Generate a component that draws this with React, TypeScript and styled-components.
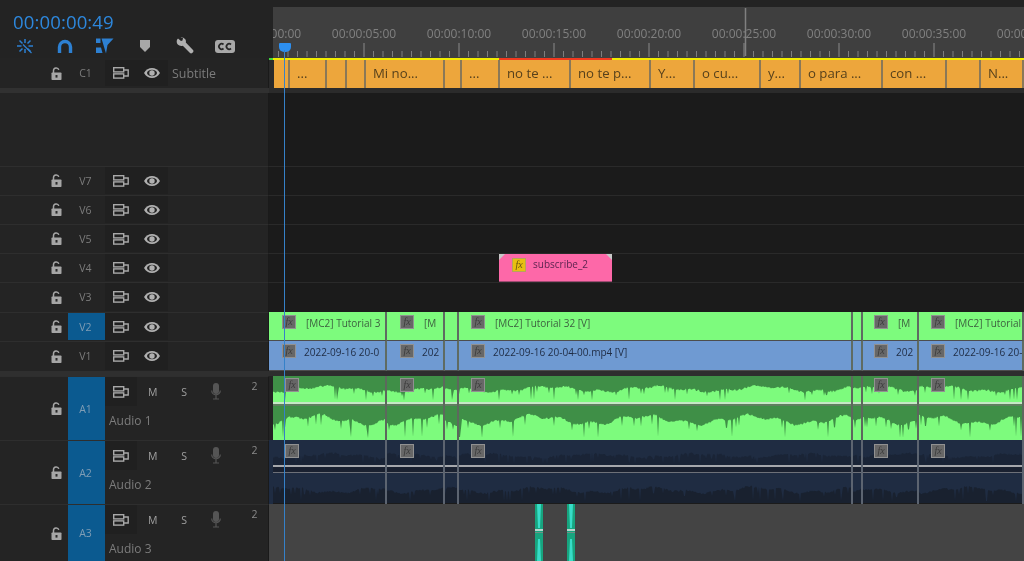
import React from "react";
import styled, { createGlobalStyle } from "styled-components";

const Global = createGlobalStyle`
  html, body { margin: 0; padding: 0; background: #1b1b1b; }
  body { font-family: "Open Sans", "Noto Sans", sans-serif; }
`;

const Page = styled.div`
  position: relative;
  width: 1024px;
  height: 561px;
  overflow: hidden;
  background: #1b1b1b;
  filter: blur(0.5px);
`;

const TopBar = styled.div`
  display: flex;
  height: 58px;
  background: #232323;
`;
const TopLeft = styled.div`
  width: 273px;
  flex: none;
  display: flex;
  flex-direction: column;
`;
const Timecode = styled.div`
  color: #2d87dc;
  font-size: 18.6px;
  line-height: 22px;
  height: 22px;
  padding: 11px 0 0 13px;
  letter-spacing: 0.1px;
`;
const Tools = styled.div`
  display: flex;
  padding: 5px 0 0 15px;
  gap: 20px;
`;
const Tool = styled.div`
  width: 20px;
  height: 16px;
  display: flex;
  align-items: center;
  justify-content: center;
`;
const Ruler = styled.div`
  position: relative;
  flex: 1;
  margin-top: 7px;
  background: #3f3f3f;
  overflow: hidden;
`;
const RulerLabels = styled.div`
  display: flex;
  margin: 20px 0 0 -51.5px;
`;
const RulerLabel = styled.span`
  flex: none;
  width: 95px;
  text-align: center;
  font-size: 12px;
  line-height: 14px;
  color: #808080;
`;
const RulerTicks = styled.svg`
  position: absolute;
  left: 0;
  top: 0;
  display: block;
`;
const PlayheadCap = styled.div`
  position: absolute;
  left: 279px;
  top: 43px;
  width: 12px;
  height: 9px;
  background: #2d8ff0;
  border-radius: 1px 1px 5px 5px;
  z-index: 6;
`;
const PlayheadLine = styled.div`
  position: absolute;
  left: 284px;
  top: 50px;
  width: 1px;
  height: 511px;
  background: #3581c9;
  z-index: 6;
`;

const StatusStrip = styled.div`
  display: flex;
  height: 2px;
  margin-left: 269px;
  background: #1b1b1b;
`;
const StatusPart = styled.div<{ $w: number; $c: string }>`
  width: ${(p) => p.$w}px;
  flex: none;
  background: ${(p) => p.$c};
`;
const TopRowHeaderFill = styled.div`
  position: absolute;
  left: 0;
  top: 58px;
  width: 269px;
  height: 2px;
  background: #242424;
`;

const Row = styled.div<{ $h: number }>`
  display: flex;
  height: ${(p) => p.$h}px;
  box-sizing: border-box;
`;
const Header = styled.div<{ $line?: boolean; $lift?: number }>`
  width: 269px;
  flex: none;
  display: flex;
  align-items: stretch;
  background: #242424;
  box-sizing: border-box;
  border-right: 1px solid #1a1a1a;
  padding-bottom: ${(p) => p.$lift ?? 0}px;
  ${(p) => (p.$line ? "border-top: 1px solid #2e2e2e;" : "")}
`;
const LockCell = styled.div`
  width: 68px;
  flex: none;
  box-sizing: border-box;
  padding-right: 6px;
  display: flex;
  align-items: center;
  justify-content: flex-end;
`;
const Target = styled.div<{ $on?: boolean }>`
  width: 37px;
  flex: none;
  box-sizing: border-box;
  padding-right: 2px;
  display: flex;
  align-items: center;
  justify-content: center;
  font-size: 10.5px;
  color: ${(p) => (p.$on ? "#7f9db5" : "#7c7c7c")};
  background: ${(p) => (p.$on ? "#0b5a90" : "transparent")};
`;
const Toggles = styled.div`
  width: 63px;
  flex: none;
  display: flex;
  align-items: center;
  background: #202020;
`;
const ToggleSlot = styled.div`
  width: 31px;
  display: flex;
  justify-content: center;
  align-items: center;
`;
const TrackName = styled.div`
  padding-left: 4px;
  align-self: center;
  font-size: 12.4px;
  color: #7c7c7c;
`;
const AudioControls = styled.div`
  flex: 1;
  display: flex;
  flex-direction: column;
`;
const AudioTop = styled.div`
  display: flex;
  align-items: center;
  height: 29px;
`;
const AudioSync = styled.div`
  width: 32px;
  height: 29px;
  flex: none;
  display: flex;
  align-items: center;
  justify-content: center;
  background: #202020;
`;
const AudioLetter = styled.span`
  width: 31.5px;
  flex: none;
  text-align: center;
  font-size: 10.5px;
  color: #a0a0a0;
`;
const MicSlot = styled.div`
  width: 31.5px;
  flex: none;
  display: flex;
  justify-content: center;
`;
const Channels = styled.span`
  margin-left: 20px;
  margin-top: -12px;
  font-size: 10.5px;
  color: #8a8a8a;
`;
const AudioName = styled.div`
  padding: 7px 0 0 4px;
  font-size: 12px;
  line-height: 16px;
  color: #7c7c7c;
`;

const Lane = styled.div<{ $bg?: string; $line?: boolean }>`
  position: relative;
  flex: 1;
  display: flex;
  overflow: hidden;
  background: ${(p) => p.$bg ?? "#1b1b1b"};
  box-sizing: border-box;
  ${(p) => (p.$line ? "border-top: 1px solid #2a2a2a;" : "")}
`;
const Band = styled.div<{ $left: string; $right: string; $h: number }>`
  display: flex;
  height: ${(p) => p.$h}px;
  background: ${(p) => p.$right};
  &::before {
    content: "";
    display: block;
    width: 269px;
    background: ${(p) => p.$left};
  }
`;
const Gap = styled.div<{ $w: number }>`
  width: ${(p) => p.$w}px;
  flex: none;
`;
const Caption = styled.div<{ $w: number }>`
  width: ${(p) => p.$w}px;
  flex: none;
  box-sizing: border-box;
  background: #eda63c;
  border-right: 2px solid #8a7858;
  color: #57411c;
  font-size: 13.2px;
  line-height: 27px;
  padding-left: 7px;
  white-space: nowrap;
  overflow: hidden;
`;
const VideoClip = styled.div<{ $w: number; $bg: string; $fg: string; $pad: number; $gap: number }>`
  width: ${(p) => p.$w}px;
  flex: none;
  box-sizing: border-box;
  display: flex;
  align-items: flex-start;
  padding: 3px 0 0 ${(p) => p.$pad}px;
  gap: ${(p) => p.$gap}px;
  overflow: hidden;
  white-space: nowrap;
  background: ${(p) => p.$bg};
  color: ${(p) => p.$fg};
  border-right: 2px solid #5f6b62;
  border-bottom: 1px solid #4d4d4d;
  font-size: 10px;
  line-height: 14px;
`;
const ClipText = styled.span`
  padding-top: 1px;
`;
const Fx = styled.span<{ $gold?: boolean }>`
  width: 14px;
  height: 14px;
  box-sizing: border-box;
  flex: none;
  display: inline-flex;
  align-items: center;
  justify-content: center;
  border: 1px solid ${(p) => (p.$gold ? "#b7a35c" : "#919191")};
  background: ${(p) => (p.$gold ? "#e8bf10" : "#676767")};
  color: ${(p) => (p.$gold ? "#6a5512" : "#3c3c3c")};
  font: italic 10px/12px "Liberation Serif", serif;
`;
const AudioClipBox = styled.div<{ $w: number; $dark?: boolean }>`
  position: relative;
  width: ${(p) => p.$w}px;
  flex: none;
  box-sizing: border-box;
  border-right: 2px solid ${(p) => (p.$dark ? "#5c6470" : "#5d685d")};
  overflow: hidden;
`;
const WaveSvg = styled.svg`
  display: block;
`;
const FloatFx = styled.div<{ $x: number; $y: number }>`
  position: absolute;
  left: ${(p) => p.$x}px;
  top: ${(p) => p.$y}px;
  display: flex;
`;
const Subscribe = styled.div`
  position: relative;
  margin-left: 230px;
  width: 113px;
  height: 28px;
  background: #fd68a8;
  box-sizing: border-box;
  display: flex;
  align-items: flex-start;
  gap: 7px;
  padding: 4px 0 0 13px;
  color: #5d2450;
  font-size: 10px;
  line-height: 13px;
  border-bottom: 1px solid #a04a72;
`;
const Corner = styled.svg<{ $right?: boolean }>`
  position: absolute;
  top: 0;
  ${(p) => (p.$right ? "right: 0;" : "left: 0;")}
`;
const Teal = styled.div<{ $x: number }>`
  position: absolute;
  left: ${(p) => p.$x}px;
  top: 0;
  width: 8px;
  height: 57px;
`;

/* ---------- icons ---------- */
const BLUE = "#2d80d2";
const IconSnap = () => (
  <svg width="18" height="16" viewBox="0 0 18 16" fill="none" stroke={BLUE} strokeWidth="1.5">
    <path d="M9 1v4M9 11v4M1 8h4.500M12.500 8H17M3.500 2.500 6.500 5.500M14.500 2.500 11.500 5.500M3.500 13.500 6.500 10.500M14.500 13.500 11.500 10.500" />
    <path d="M7 6.500 15.500 15" strokeWidth="1.200" />
  </svg>
);
const IconMagnet = () => (
  <svg width="16" height="15" viewBox="0 0 16 15" fill="none">
    <path d="M2.500 14V8a5.500 5.500 0 0 1 11 0v6" stroke={BLUE} strokeWidth="3.400" />
  </svg>
);
const IconLinked = () => (
  <svg width="18" height="16" viewBox="0 0 18 16" fill={BLUE}>
    <path d="M0 0.500h4.500V5H0zM0 9.500h5L6.500 15H0z" />
    <path d="M5.500 .5H17.500L11.500 7 10 15.500z" />
  </svg>
);
const IconMarker = () => (
  <svg width="10" height="12" viewBox="0 0 10 12" fill="#a8a8a8">
    <path d="M0 0h10v7l-5 5-5-5z" />
  </svg>
);
const IconWrench = () => (
  <svg width="18" height="18" viewBox="0 0 18 18" fill="#b0b0b0">
    <path d="M2 1.500 5 4l1.500-.6L7 1 4.600.4A5 5 0 0 1 9 2c1 1.100 1.100 2.500.8 3.600l7.200 7.400c.6.600.6 1.500 0 2.200l-.8.800c-.7.600-1.600.6-2.200 0L6.800 8.700C5 9.200 3 8.800 1.800 7.500.7 6.300.4 4.300 1 2.800z" />
  </svg>
);
const IconCC = () => (
  <svg width="20" height="13" viewBox="0 0 20 13">
    <rect x="0" y="0" width="20" height="13" rx="3" fill="#a8a8a8" />
    <path d="M8.500 4.500A2.700 2.700 0 1 0 8.500 8.500M16 4.500A2.700 2.700 0 1 0 16 8.500" fill="none" stroke="#262626" strokeWidth="1.700" />
  </svg>
);
const IconLock = () => (
  <svg width="11" height="13" viewBox="0 0 11 13">
    <path d="M2.500 6V3.500a2.700 2.700 0 0 1 5.300-.6" fill="none" stroke="#a6a6a6" strokeWidth="1.500" />
    <rect x="0.500" y="5.500" width="10" height="7.500" rx="0.800" fill="#a6a6a6" />
    <rect x="4.500" y="8" width="2" height="2.600" fill="#2a2a2a" />
  </svg>
);
const IconSync = () => (
  <svg width="16" height="12" viewBox="0 0 16 12" fill="none" stroke="#a8a8a8" strokeWidth="1.400">
    <rect x="0.700" y="0.700" width="10" height="4.200" />
    <rect x="0.700" y="6.900" width="10" height="4.200" />
    <path d="M10.700 3h4.500v6h-4.500" />
  </svg>
);
const IconEye = () => (
  <svg width="16" height="10" viewBox="0 0 16 10">
    <path d="M0 5c2-3.200 4.800-5 8-5s6 1.800 8 5c-2 3.200-4.800 5-8 5S2 8.200 0 5z" fill="#b0b0b0" />
    <ellipse cx="8" cy="5" rx="5" ry="3.300" fill="#242424" />
    <circle cx="8" cy="5" r="2.700" fill="#b0b0b0" />
  </svg>
);
const IconMic = () => (
  <svg width="10" height="17" viewBox="0 0 10 17">
    <rect x="2" y="0" width="6" height="11" rx="3" fill="#555555" />
    <path d="M.7 7.500a4.300 4.300 0 0 0 8.600 0M5 12v3.500M2 16h6" fill="none" stroke="#555555" strokeWidth="1.200" />
  </svg>
);

/* ---------- data ---------- */
const captions: [number, string][] = [
  [16, ""], [37, "..."], [20, ""], [19, ""], [79, "Mi no..."], [17, ""], [38, "..."],
  [71, "no te ..."], [80, "no te p..."], [44, "Y..."], [66, "o cu..."], [40, "y..."],
  [82, "o para ..."], [64, "con ..."], [34, ""], [43, "N..."],
];
const cuts = [118, 58, 14, 394, 10, 56, 105];
const pads = [13, 13, 0, 12, 0, 11, 12];
const greenLabels = ["[MC2] Tutorial 3", "[M", "", "[MC2] Tutorial  32 [V]", "", "[M", "[MC2] Tutorial"];
const blueLabels = ["2022-09-16 20-0", "202", "", "2022-09-16 20-04-00.mp4 [V]", "", "202", "2022-09-16 20-04-00.mp4 [V]"];
const labels = ["00:00:00:00", "00:00:05:00", "00:00:10:00", "00:00:15:00", "00:00:20:00", "00:00:25:00", "00:00:30:00", "00:00:35:00", "00:00:40:00"];
const audioCuts = [114, 58, 14, 394, 10, 56, 105];
const audioPads = [12, 13, 0, 12, 0, 11, 12];

const rand = (seed: number) => {
  let s = seed;
  return () => {
    s = (s * 16807) % 2147483647;
    return s / 2147483647;
  };
};

const wavePath = (w: number, base: number, h: number, seed: number) => {
  const r = rand(seed * 977 + 5);
  let d = `M0 ${base}`;
  for (let x = 0; x <= w; x += 1) {
    const v = r();
    const slow = 0.6 + 0.12 * Math.sin(x / 17 + seed) + 0.06 * Math.sin(x / 5 + seed * 2);
    let level = h * slow + r() * 2;
    if (v > 0.965) level *= 0.15;
    else if (v > 0.9) level *= 0.6;
    d += `L${x} ${(base - Math.max(1, level)).toFixed(1)}`;
  }
  return `${d}L${w} ${base}Z`;
};

const Wave: React.FC<{ w: number; seed: number }> = ({ w, seed }) => (
  <WaveSvg width={w} height="64" viewBox={`0 0 ${w} 64`}>
    <rect width={w} height="64" fill="#3f8f47" />
    <path d={wavePath(w, 26, 20, seed)} fill="#7dfb7d" />
    <rect y="26" width={w} height="2" fill="#c5e8c5" />
    <rect y="28" width={w} height="2" fill="#5f7f5f" />
    <path d={wavePath(w, 64, 32, seed + 7)} fill="#7dfb7d" />
  </WaveSvg>
);

const DarkWave: React.FC<{ w: number; seed: number }> = ({ w, seed }) => (
  <WaveSvg width={w} height="64" viewBox={`0 0 ${w} 64`}>
    <rect width={w} height="64" fill="#1f2c42" />
    <path d={wavePath(w, 25, 14, seed)} fill="#1a2436" />
    <rect y="25" width={w} height="2" fill="#a6a8ac" />
    <rect y="27" width={w} height="5" fill="#1a2130" />
    <rect y="32" width={w} height="1" fill="#6d7078" />
    <path d={wavePath(w, 63, 20, seed + 3)} fill="#19212f" />
    <rect y="63" width={w} height="1" fill="#1b1b1b" />
  </WaveSvg>
);

const TealClip: React.FC<{ x: number }> = ({ x }) => (
  <Teal $x={x}>
    <svg width="8" height="57" viewBox="0 0 8 57">
      <rect width="8" height="57" fill="#17a57f" />
      <path d="M2 0h4L5 24H3zM2 57h4L5 35H3z" fill="#38dcc8" />
      <rect y="25" width="8" height="2" fill="#b6d6cc" />
      <rect y="28" width="8" height="1" fill="#6f8f86" />
    </svg>
  </Teal>
);

const Ticks = () => {
  const items = [];
  for (let i = 0; i < 80; i++) {
    const x = i * 9.5 - 4;
    const major = i % 10 === 0;
    items.push(
      <line key={i} x1={x} x2={x} y1={major ? 36 : 44} y2="50" stroke={major ? "#8a8a8a" : "#7e7e7e"} strokeWidth="1" />
    );
  }
  return (
    <RulerTicks width="751" height="51" viewBox="0 0 751 51">
      {items}
      <line x1="472.500" x2="472.500" y1="1" y2="49" stroke="#808080" strokeWidth="1.500" />
    </RulerTicks>
  );
};

const VideoHeader: React.FC<{ name: string; on?: boolean }> = ({ name, on }) => (
  <Header $line $lift={1}>
    <LockCell><IconLock /></LockCell>
    <Target $on={on}>{name}</Target>
    <Toggles>
      <ToggleSlot><IconSync /></ToggleSlot>
      <ToggleSlot><IconEye /></ToggleSlot>
    </Toggles>
  </Header>
);

const AudioHeader: React.FC<{ n: number }> = ({ n }) => (
  <Header $line>
    <LockCell><IconLock /></LockCell>
    <Target $on>{`A${n}`}</Target>
    <AudioControls>
      <AudioTop>
        <AudioSync><IconSync /></AudioSync>
        <AudioLetter>M</AudioLetter>
        <AudioLetter>S</AudioLetter>
        <MicSlot><IconMic /></MicSlot>
        <Channels>2</Channels>
      </AudioTop>
      <AudioName>{`Audio ${n}`}</AudioName>
    </AudioControls>
  </Header>
);

export default function App() {
  return (
    <Page>
      <Global />
      <TopBar>
        <TopLeft>
          <Timecode>00:00:00:49</Timecode>
          <Tools>
            <Tool><IconSnap /></Tool>
            <Tool><IconMagnet /></Tool>
            <Tool><IconLinked /></Tool>
            <Tool><IconMarker /></Tool>
            <Tool><IconWrench /></Tool>
            <Tool><IconCC /></Tool>
          </Tools>
        </TopLeft>
        <Ruler>
          <RulerLabels>
            {labels.map((l) => <RulerLabel key={l}>{l}</RulerLabel>)}
          </RulerLabels>
          <Ticks />
        </Ruler>
      </TopBar>
      <PlayheadCap />
      <PlayheadLine />

      <TopRowHeaderFill />
      <StatusStrip>
        <StatusPart $w={4} $c="#3fd43f" />
        <StatusPart $w={226} $c="#f2ec00" />
        <StatusPart $w={113} $c="#f0391f" />
        <StatusPart $w={412} $c="#f2ec00" />
      </StatusStrip>

      <Row $h={28}>
        <Header $lift={2}>
          <LockCell><IconLock /></LockCell>
          <Target>C1</Target>
          <Toggles>
            <ToggleSlot><IconSync /></ToggleSlot>
            <ToggleSlot><IconEye /></ToggleSlot>
          </Toggles>
          <TrackName>Subtitle</TrackName>
        </Header>
        <Lane $bg="#2a2a2a">
          <Gap $w={5} />
          {captions.map(([w, t], i) => <Caption key={i} $w={w}>{t}</Caption>)}
        </Lane>
      </Row>
      <Band $h={5} $left="#313131" $right="#2b2b2b" />
      <Row $h={73}>
        <Header />
        <Lane />
      </Row>

      {["V7", "V6", "V5"].map((n) => (
        <Row $h={29} key={n}>
          <VideoHeader name={n} />
          <Lane $line />
        </Row>
      ))}
      <Row $h={29}>
        <VideoHeader name="V4" />
        <Lane $line>
          <Subscribe>
            <Corner width="6" height="6" viewBox="0 0 6 6"><path d="M0 0h6L0 6z" fill="#c8c8c8" /></Corner>
            <Corner $right width="6" height="6" viewBox="0 0 6 6"><path d="M0 0h6v6z" fill="#c8c8c8" /></Corner>
            <Fx $gold>fx</Fx>
            <span>subscribe_2</span>
          </Subscribe>
        </Lane>
      </Row>
      <Row $h={30}>
        <VideoHeader name="V3" />
        <Lane $line />
      </Row>
      <Row $h={29}>
        <VideoHeader name="V2" on />
        <Lane $bg="#2a2a2a">
          {cuts.map((w, i) => (
            <VideoClip key={i} $w={w} $bg="#7dfb7d" $fg="#3c5f3f" $pad={pads[i]} $gap={10}>
              {pads[i] > 0 && <Fx>fx</Fx>}
              {greenLabels[i] && <ClipText>{greenLabels[i]}</ClipText>}
            </VideoClip>
          ))}
        </Lane>
      </Row>
      <Row $h={30}>
        <VideoHeader name="V1" />
        <Lane>
          {cuts.map((w, i) => (
            <VideoClip key={i} $w={w} $bg="#6f9ad2" $fg="#1f2c44" $pad={pads[i]} $gap={8}>
              {pads[i] > 0 && <Fx>fx</Fx>}
              {blueLabels[i] && <ClipText>{blueLabels[i]}</ClipText>}
            </VideoClip>
          ))}
        </Lane>
      </Row>
      <Band $h={5} $left="#2f2f2f" $right="#2e2e2e" />
      <Row $h={64}>
        <AudioHeader n={1} />
        <Lane $bg="#232323">
          <Gap $w={4} />
          {audioCuts.map((w, i) => (
            <AudioClipBox key={i} $w={w}>
              <Wave w={w} seed={i * 37 + 11} />
              {audioPads[i] > 0 && <FloatFx $x={audioPads[i]} $y={2}><Fx>fx</Fx></FloatFx>}
            </AudioClipBox>
          ))}
        </Lane>
      </Row>
      <Row $h={64}>
        <AudioHeader n={2} />
        <Lane $bg="#1f2c42">
          <Gap $w={4} />
          {audioCuts.map((w, i) => (
            <AudioClipBox key={i} $w={w} $dark>
              <DarkWave w={w} seed={i * 53 + 17} />
              {audioPads[i] > 0 && <FloatFx $x={audioPads[i]} $y={4}><Fx>fx</Fx></FloatFx>}
            </AudioClipBox>
          ))}
        </Lane>
      </Row>
      <Row $h={57}>
        <AudioHeader n={3} />
        <Lane $bg="#444444">
          <TealClip x={266} />
          <TealClip x={298} />
        </Lane>
      </Row>
    </Page>
  );
}
